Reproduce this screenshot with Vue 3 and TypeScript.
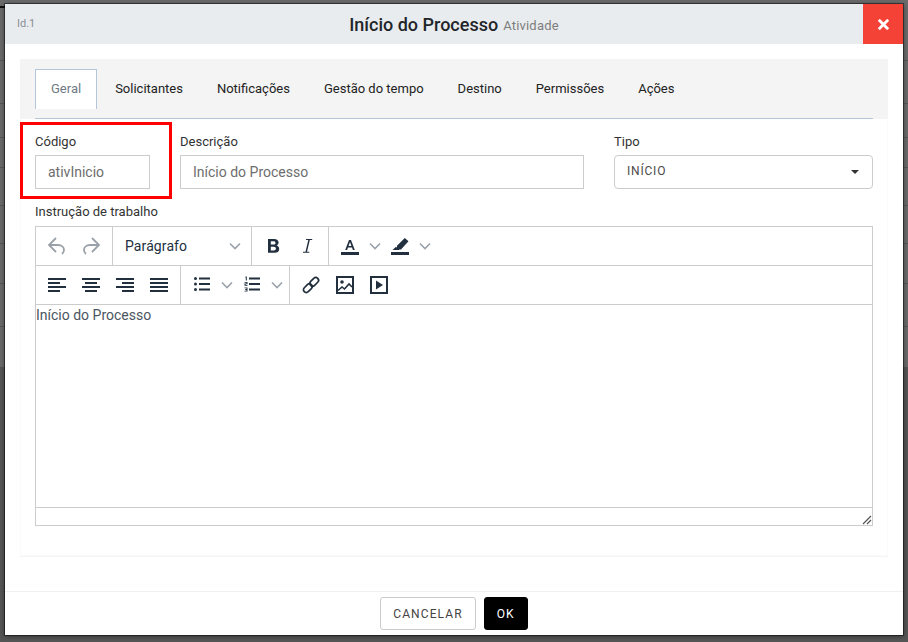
<template>
  <div class="backdrop">
    <div class="page-behind">
      <div v-for="y in behindLines" :key="y" class="bg-line" :style="{ top: y + 'px' }"></div>
      <div class="bg-mark"></div>
    </div>
    <div class="modal">
      <header class="modal-head">
        <span class="modal-id">Id.1</span>
        <div class="modal-title">
          <strong>Início do Processo</strong>
          <small>Atividade</small>
        </div>
        <button class="close-btn" aria-label="Fechar">
          <svg width="11" height="11" viewBox="0 0 11 11"><path d="M1.800 1.800l7.400 7.400M9.200 1.800l-7.400 7.400" stroke="#fff" stroke-width="2.800" stroke-linecap="square" /></svg>
        </button>
      </header>

      <div class="modal-body">
        <div class="panel">
          <div class="tabs-wrap">
            <ul class="tabs">
              <li v-for="(tab, i) in tabs" :key="tab" class="tab" :class="{ active: i === 0 }">{{ tab }}</li>
            </ul>
          </div>

          <div class="form">
            <div class="form-row">
              <div class="field field-code">
                <div class="highlight"></div>
                <label>Código</label>
                <input class="input" value="ativInicio" />
              </div>
              <div class="field field-desc">
                <label>Descrição</label>
                <input class="input" value="Início do Processo" />
              </div>
              <div class="field field-type">
                <label>Tipo</label>
                <div class="select">
                  <span>INÍCIO</span>
                  <i class="caret"></i>
                </div>
              </div>
            </div>

            <label class="editor-label">Instrução de trabalho</label>
            <div class="editor">
              <div class="toolbar">
                <div class="group">
                  <button class="tool">
                    <svg width="20" height="20" viewBox="0 0 20 20"><path d="M9 2L2 9l7 7M2 9h9c4 0 6 2.500 6 5 0 1.500-.7 2.700-2 4" fill="none" stroke="#9aa1a9" stroke-width="1.800" /></svg>
                  </button>
                  <button class="tool">
                    <svg width="20" height="20" viewBox="0 0 20 20"><path d="M11 2l7 7-7 7M18 9H9c-4 0-6 2.500-6 5 0 1.500.7 2.700 2 4" fill="none" stroke="#9aa1a9" stroke-width="1.800" /></svg>
                  </button>
                </div>
                <div class="group format">
                  <span class="format-name">Parágrafo</span>
                  <svg class="chev" width="12" height="8" viewBox="0 0 12 8"><path d="M1 1.500l5 5 5-5" fill="none" stroke="#9aa1a9" stroke-width="1.600" /></svg>
                </div>
                <div class="group">
                  <button class="tool">
                    <svg width="20" height="20" viewBox="0 0 20 20"><path d="M5 3h6c3 0 4.600 1.500 4.600 3.600 0 1.400-.8 2.500-2 3 1.700.4 2.600 1.700 2.600 3.300 0 2.600-2 3.800-4.600 3.800H5zM7.800 5.300v3.300h2.800c1.100 0 1.900-.6 1.900-1.650s-.8-1.650-1.900-1.650zM7.800 10.700v3.800h3c1.300 0 2.100-.7 2.100-1.900s-.8-1.900-2.100-1.900z" fill="#222f3e" fill-rule="evenodd" /></svg>
                  </button>
                  <button class="tool">
                    <svg width="20" height="20" viewBox="0 0 20 20"><path d="M9 3h6.200v.9h-2.400L10 15.800h2.300v.9H6v-.9h2.500L11.300 3.900H9z" fill="#222f3e" /></svg>
                  </button>
                </div>
                <div class="group">
                  <button class="tool wide">
                    <svg width="20" height="20" viewBox="0 0 20 20"><path d="M9 4h2l3.800 10h-1.900l-.9-2.500H8l-.9 2.500H5.200zM8.600 9.900h2.800L10 6z" fill="#222f3e" fill-rule="evenodd" /><rect x="1" y="16" width="18" height="3" fill="#222f3e" /></svg>
                    <svg class="chev" width="12" height="8" viewBox="0 0 12 8"><path d="M1 1.500l5 5 5-5" fill="none" stroke="#9aa1a9" stroke-width="1.600" /></svg>
                  </button>
                  <button class="tool wide">
                    <svg width="20" height="20" viewBox="0 0 20 20"><path d="M14.800 2l3.700 3.200-7.500 8.300H7v-3.800zM6 10.800l3.500 3.200H2.500z" fill="#222f3e" /><rect x="1" y="16" width="18" height="3" fill="#222f3e" /></svg>
                    <svg class="chev" width="12" height="8" viewBox="0 0 12 8"><path d="M1 1.500l5 5 5-5" fill="none" stroke="#9aa1a9" stroke-width="1.600" /></svg>
                  </button>
                </div>
              </div>
              <div class="toolbar">
                <div class="group">
                  <button v-for="a in aligns" :key="a.name" class="tool">
                    <svg width="20" height="20" viewBox="0 0 20 20"><rect v-for="(r, i) in a.rows" :key="i" :x="r[0]" :y="3 + i * 4" :width="r[1]" height="2" fill="#222f3e" /></svg>
                  </button>
                </div>
                <div class="group">
                  <button class="tool wide">
                    <svg width="20" height="20" viewBox="0 0 20 20"><circle cx="3.500" cy="3.500" r="1.500" fill="#222f3e" /><circle cx="3.500" cy="9" r="1.500" fill="#222f3e" /><circle cx="3.500" cy="14.500" r="1.500" fill="#222f3e" /><path d="M7 2.500h11v2H7zM7 8h11v2H7zM7 13.500h11v2H7z" fill="#222f3e" /></svg>
                    <svg class="chev" width="12" height="8" viewBox="0 0 12 8"><path d="M1 1.500l5 5 5-5" fill="none" stroke="#9aa1a9" stroke-width="1.600" /></svg>
                  </button>
                  <button class="tool wide">
                    <svg width="20" height="20" viewBox="0 0 20 20"><path d="M3.500 1.500h1.300v4H3.800V2.500h-.6zM2.500 7h3v2.300H3.600V10h1.900v.8h-3V8.600h1.900V7.800H2.500zM2.500 12.500h3v4h-3v-.8h2v-.8H3.200v-.8h1.300v-.8h-2zM7 2.500h11v2H7zM7 8h11v2H7zM7 13.500h11v2H7z" fill="#222f3e" /></svg>
                    <svg class="chev" width="12" height="8" viewBox="0 0 12 8"><path d="M1 1.500l5 5 5-5" fill="none" stroke="#9aa1a9" stroke-width="1.600" /></svg>
                  </button>
                </div>
                <div class="group">
                  <button class="tool">
                    <svg width="20" height="20" viewBox="0 0 20 20"><g fill="none" stroke="#222f3e" stroke-width="1.700" transform="rotate(-45 10 10)"><rect x="0.500" y="7.200" width="10" height="5.600" rx="2.800" /><rect x="9.500" y="7.200" width="10" height="5.600" rx="2.800" /></g></svg>
                  </button>
                  <button class="tool">
                    <svg width="20" height="20" viewBox="0 0 20 20"><rect x="2" y="2" width="16" height="16" fill="none" stroke="#222f3e" stroke-width="2" /><circle cx="7" cy="7" r="1.800" fill="#222f3e" /><path d="M3 15.500l4-3.500 2.500 2L14 9l3 3" fill="none" stroke="#222f3e" stroke-width="1.600" /></svg>
                  </button>
                  <button class="tool">
                    <svg width="20" height="20" viewBox="0 0 20 20"><rect x="2" y="2" width="16" height="16" fill="none" stroke="#222f3e" stroke-width="2" /><path d="M7 5.500l7 4.500-7 4.500z" fill="#222f3e" /></svg>
                  </button>
                </div>
              </div>
              <div class="editor-area">Início do Processo</div>
              <div class="status">
                <svg width="10" height="10" viewBox="0 0 10 10"><path d="M9 1L1 9M9 5L5 9" stroke="#555" stroke-width="1.200" /></svg>
              </div>
            </div>
          </div>
        </div>
      </div>

      <footer class="modal-foot">
        <button class="btn">CANCELAR</button>
        <button class="btn btn-ok">OK</button>
      </footer>
    </div>
  </div>
</template>

<script setup lang="ts">
const tabs: string[] = ['Geral', 'Solicitantes', 'Notificações', 'Gestão do tempo', 'Destino', 'Permissões', 'Ações']

// linhas da tabela que aparece atras do modal
const behindLines: number[] = [60, 103, 137, 167, 205, 243, 283, 326]

const aligns = [
  { name: 'left', rows: [[1, 18], [1, 12], [1, 18], [1, 12]] },
  { name: 'center', rows: [[1, 18], [4, 12], [1, 18], [4, 12]] },
  { name: 'right', rows: [[1, 18], [7, 12], [1, 18], [7, 12]] },
  { name: 'justify', rows: [[1, 18], [1, 18], [1, 18], [1, 18]] },
]
</script>

<style scoped>
.backdrop {
  position: relative;
  width: 908px;
  height: 642px;
  box-sizing: border-box;
  padding: 4px 5px 7px;
  background: #555;
  font-family: Roboto, "Liberation Sans", sans-serif;
  overflow: hidden;
}

.page-behind {
  position: absolute;
  left: 0;
  top: 0;
  width: 100%;
  height: 367px;
  background: #6a6a6a;
}

.bg-line {
  position: absolute;
  left: 0;
  width: 100%;
  height: 1px;
  background: #575757;
}

.bg-mark {
  position: absolute;
  left: 0;
  top: 6px;
  width: 6px;
  height: 2px;
  background: #111;
}

.modal {
  position: relative;
  height: 100%;
  display: flex;
  flex-direction: column;
  background: #fff;
  box-shadow: 0 0 0 1px rgba(0, 0, 0, 0.45), 0 1px 5px rgba(0, 0, 0, 0.5);
}

.modal-head {
  position: relative;
  flex: none;
  height: 40px;
  display: flex;
  align-items: center;
  justify-content: center;
  background: #e9ecef;
}

.modal-id {
  position: absolute;
  left: 12px;
  top: 13px;
  font-size: 11px;
  color: #8a8f94;
}

.modal-title strong {
  font-size: 18px;
  font-weight: 500;
  color: #212529;
}

.modal-title small {
  position: relative;
  top: -1px;
  margin-left: 5px;
  font-size: 13px;
  letter-spacing: 0.2px;
  color: #7d7d7d;
}

.close-btn {
  position: absolute;
  right: 0;
  top: 0;
  width: 40px;
  height: 40px;
  padding: 0;
  border: none;
  background: #f44336;
  display: flex;
  align-items: center;
  justify-content: center;
}

.modal-body {
  flex: 1;
  padding: 15px 15px 0;
}

.panel {
  height: 498px;
  box-sizing: border-box;
  box-shadow: inset 0 0 0 1px #fbfbfb;
  border-bottom: 1px solid #f4f4f4;
}

.tabs-wrap {
  height: 60px;
  box-sizing: border-box;
  padding: 10px 15px 0;
  background: #f4f4f4;
}

.tabs {
  list-style: none;
  margin: 0;
  padding: 0;
  height: 50px;
  box-sizing: border-box;
  display: flex;
  border-bottom: 1px solid #b4c6d8;
}

.tab {
  height: 40px;
  padding: 0 17px;
  font-size: 13px;
  line-height: 40px;
  color: #222;
  box-sizing: border-box;
}

.tab.active {
  height: 40px;
  padding: 0 15px;
  margin-right: 1px;
  line-height: 38px;
  border: 1px solid #b4c6d8;
  border-bottom: none;
  background: #fff;
  color: #6f7a85;
}

.form {
  padding: 0 15px;
}

.form-row {
  display: flex;
  padding-top: 14px;
}

.field {
  position: relative;
  display: flex;
  flex-direction: column;
}

.field label,
.editor-label {
  display: block;
  font-size: 13px;
  line-height: 18px;
  color: #333;
}

.field-code {
  width: 115px;
  margin-right: 30px;
}

.field-desc {
  width: 404px;
  margin-right: 30px;
}

.field-type {
  width: 259px;
}

.highlight {
  position: absolute;
  left: -15px;
  right: -22px;
  top: -11px;
  height: 77px;
  box-sizing: border-box;
  border: 3px solid #f00;
  pointer-events: none;
}

.input {
  width: 100%;
  height: 34px;
  margin-top: 4px;
  padding: 0 12px;
  box-sizing: border-box;
  border: 1px solid #ccc;
  outline: none;
  font: 14px Roboto, "Liberation Sans", sans-serif;
  color: #6d6d6d;
}

.select {
  height: 34px;
  margin-top: 4px;
  padding: 0 12px 2px;
  box-sizing: border-box;
  display: flex;
  align-items: center;
  justify-content: space-between;
  border: 1px solid #ccc;
  border-radius: 4px;
  font-size: 12px;
  letter-spacing: 0.8px;
  color: #4a4a4a;
}

.caret {
  margin-right: 1px;
  margin-top: 2px;
  border-top: 4px solid #333;
  border-left: 4px solid transparent;
  border-right: 4px solid transparent;
}

.editor-label {
  margin-top: 14px;
}

.editor {
  margin-top: 5px;
  border: 1px solid #ccc;
}

.toolbar {
  height: 39px;
  display: flex;
  box-sizing: border-box;
  border-bottom: 1px solid #ccc;
}

.group {
  display: flex;
  align-items: center;
  padding: 0 4px;
  border-right: 1px solid #ccc;
}

.group:last-child {
  border-right: none;
}

.tool {
  width: 34px;
  height: 30px;
  padding: 0;
  border: none;
  background: none;
  display: flex;
  align-items: center;
  justify-content: center;
}

.tool.wide {
  width: 50px;
  box-sizing: border-box;
  justify-content: flex-start;
  gap: 9px;
  padding-left: 7px;
}

.format {
  width: 139px;
  box-sizing: border-box;
  padding: 0 10px 0 12px;
  justify-content: space-between;
}

.format-name {
  font-size: 14px;
  letter-spacing: 0.1px;
  color: #222f3e;
}

.editor-area {
  height: 203px;
  box-sizing: border-box;
  border-bottom: 1px solid #ccc;
  padding-top: 1px;
  font-size: 14px;
  line-height: 18px;
  color: #4b5560;
}

.status {
  height: 17px;
  display: flex;
  align-items: flex-end;
  justify-content: flex-end;
}

.modal-foot {
  flex: none;
  height: 44px;
  box-sizing: border-box;
  display: flex;
  align-items: center;
  justify-content: center;
  gap: 8px;
  border-top: 1px solid #f0f0f0;
}

.btn {
  height: 33px;
  padding: 0 12px;
  border: 1px solid #ccc;
  border-radius: 3px;
  background: #fff;
  font: 12px Roboto, "Liberation Sans", sans-serif;
  letter-spacing: 1.1px;
  color: #444;
}

.btn-ok {
  width: 44px;
  padding: 0;
  border-color: #000;
  background: #000;
  color: #fff;
}
</style>

<style>
html, body { margin: 0; }
</style>
